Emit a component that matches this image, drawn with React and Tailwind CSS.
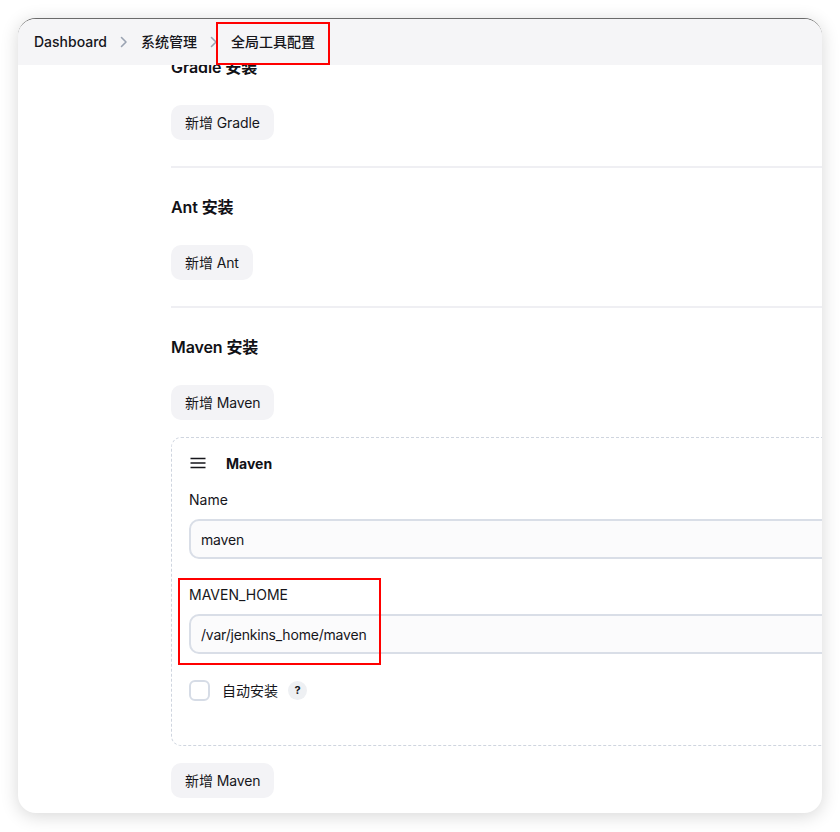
import React from "react";

const font = { fontFamily: '"Inter", "Noto Sans CJK SC", sans-serif' };

const Chevron = () => (
    <svg width="8" height="12" viewBox="0 0 8 12" className="shrink-0">
        <path d="M1.5 1.5 L6 6 L1.5 10.5" fill="none" stroke="#9aa3b2" strokeWidth="1.6" strokeLinecap="round" strokeLinejoin="round" />
    </svg>
);

const AddButton = ({ label }) => (
    <button className="h-[35px] px-[14px] rounded-[10px] bg-[#f3f3f6] text-[14px] tracking-[-0.1px] text-[#16161b] self-start">
        {label}
    </button>
);

const Heading = ({ children }) => (
    <h2 className="h-[24px] leading-[24px] text-[16px] font-semibold tracking-[-0.1px] text-[#111116]">{children}</h2>
);

const Divider = () => <div className="h-[2px] bg-[#efeff3] mt-[26px] mb-[27px]" />;

const Field = ({ label, value }) => (
    <div className="flex flex-col">
        <label className="h-[24px] leading-[24px] text-[14px] text-[#16161b]">{label}</label>
        <div className="mt-[7px] h-[40px] rounded-[10px] border-2 border-[#d9dee7] bg-[#fbfbfc] px-[10px] flex items-center text-[14px] tracking-[-0.2px] text-[#16161b]">
            {value}
        </div>
    </div>
);

export default function App() {
    return (
        <div className="w-[840px] h-[832px] bg-white pt-[18px] pl-[18px]" style={font}>
            <div className="w-[804px] h-[795px] rounded-[18px] border-t border-[#6b6b6b] bg-white shadow-[0_3px_18px_rgba(0,0,0,0.16)] overflow-hidden flex flex-col">
                {/* breadcrumb */}
                <div className="h-[46px] shrink-0 bg-[#f5f5f7] flex items-center pl-[16px] gap-[13px] text-[14px] leading-[20px] font-medium text-[#16161b] relative z-10">
                    <span>Dashboard</span>
                    <Chevron />
                    <span>系统管理</span>
                    <Chevron />
                    <span className="relative">
                        全局工具配置
                        <span className="absolute left-[-15px] right-[-15px] top-[-10px] bottom-[-13px] border-2 border-[#ff0000]" />
                    </span>
                </div>

                {/* content */}
                <div className="flex-1 overflow-hidden">
                    <div className="-mt-[10px] ml-[153px] w-[760px] flex flex-col">
                        <Heading>Gradle 安装</Heading>
                        <div className="mt-[26px] flex flex-col"><AddButton label="新增 Gradle" /></div>
                        <Divider />

                        <Heading>Ant 安装</Heading>
                        <div className="mt-[26px] flex flex-col"><AddButton label="新增 Ant" /></div>
                        <Divider />

                        <Heading>Maven 安装</Heading>
                        <div className="mt-[26px] flex flex-col"><AddButton label="新增 Maven" /></div>

                        <div className="mt-[17px] h-[309px] rounded-[10px] border border-dashed border-[#cfd5df] pt-[13px] pl-[17px] pr-[40px] flex flex-col">
                            <div className="h-[24px] flex items-center gap-[20px]">
                                <svg width="16" height="12" viewBox="0 0 16 12" className="ml-[1px]">
                                    <path d="M0.5 1.5 H15.5 M0.5 6 H15.5 M0.5 10.5 H15.5" stroke="#16161b" strokeWidth="1.5" />
                                </svg>
                                <span className="text-[14px] font-bold text-[#111116]">Maven</span>
                            </div>
                            <div className="mt-[13px]">
                                <Field label="Name" value="maven" />
                            </div>
                            <div className="mt-[24px] relative">
                                <Field label="MAVEN_HOME" value="/var/jenkins_home/maven" />
                                <div className="absolute left-[-11px] top-[-5px] w-[203px] h-[87px] border-2 border-[#ff0000]" />
                            </div>
                            <div className="mt-[25px] h-[22px] flex items-center">
                                <span className="w-[21px] h-[21px] rounded-[6px] border-2 border-[#d6dce6] bg-white" />
                                <span className="ml-[12px] text-[14px] text-[#16161b]">自动安装</span>
                                <span className="ml-[10px] w-[19px] h-[19px] rounded-full bg-[#eef0f3] flex items-center justify-center text-[11px] font-bold text-[#16161b]">?</span>
                            </div>
                        </div>

                        <div className="mt-[17px] flex flex-col"><AddButton label="新增 Maven" /></div>
                    </div>
                </div>
            </div>
        </div>
    );
}
